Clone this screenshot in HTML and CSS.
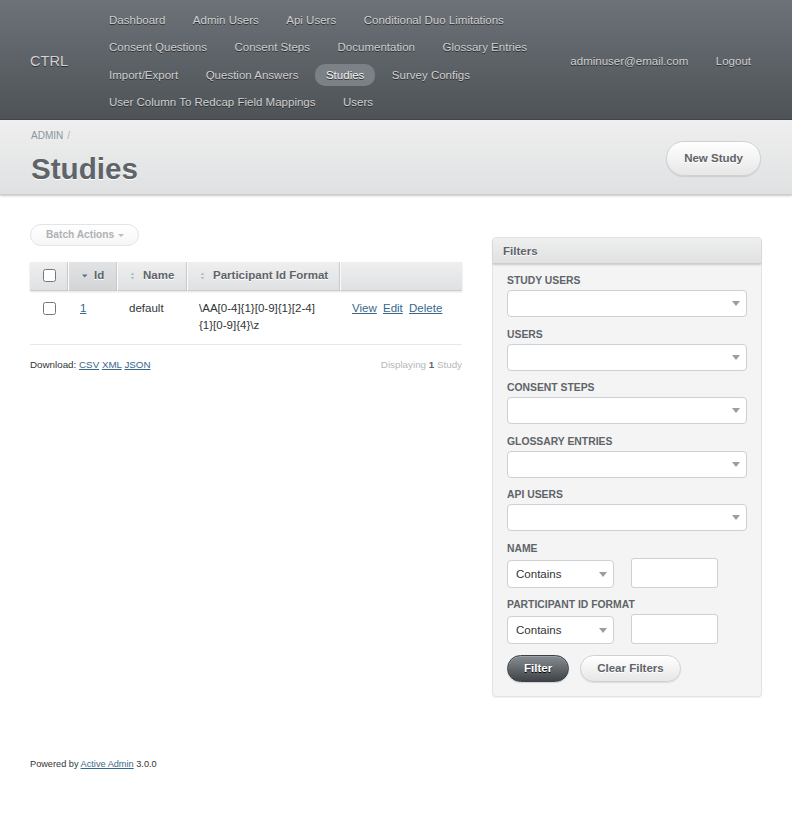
FILE: index.html
```html
<!DOCTYPE html>
<html lang="en">
<head>
<meta charset="utf-8">
<title>Studies | CTRL</title>
<link rel="stylesheet" href="styles.css">
</head>
<body>
<header class="header">
  <h1 class="site-title">CTRL</h1>
  <ul class="tabs">
    <li><a href="#">Dashboard</a></li>
    <li><a href="#">Admin Users</a></li>
    <li><a href="#">Api Users</a></li>
    <li><a href="#">Conditional Duo Limitations</a></li>
    <li><a href="#">Consent Questions</a></li>
    <li><a href="#">Consent Steps</a></li>
    <li><a href="#">Documentation</a></li>
    <li><a href="#">Glossary Entries</a></li>
    <li><a href="#">Import/Export</a></li>
    <li><a href="#">Question Answers</a></li>
    <li class="current"><a href="#">Studies</a></li>
    <li><a href="#">Survey Configs</a></li>
    <li><a href="#">User Column To Redcap Field Mappings</a></li>
    <li><a href="#">Users</a></li>
  </ul>
  <ul class="utility-nav">
    <li><a href="#">adminuser@email.com</a></li>
    <li><a href="#">Logout</a></li>
  </ul>
</header>

<div class="title-bar">
  <div class="title-left">
    <div class="breadcrumb"><a href="#">Admin</a><span class="sep">/</span></div>
    <h2 class="page-title">Studies</h2>
  </div>
  <div class="action-items">
    <a class="button button-large" href="#">New Study</a>
  </div>
</div>

<div class="content">
  <main class="main">
    <div class="table-tools">
      <span class="dropdown-button disabled">Batch Actions<span class="caret"></span></span>
    </div>
    <table class="index-table">
      <thead>
        <tr>
          <th class="col-check"><input type="checkbox" class="cb"></th>
          <th class="col-id sorted"><a href="#" class="sort"><svg class="sort-icon" width="13" height="10" viewBox="0 0 13 10"><path d="M1 3.5 L6.5 3.5 L3.75 6.5 Z" fill="#676d72"/></svg>Id</a></th>
          <th class="col-name"><a href="#" class="sort"><svg class="sort-icon" width="13" height="10" viewBox="0 0 13 10"><path d="M0.5 4 L4.5 4 L2.5 1.5 Z M0.5 6 L4.5 6 L2.5 8.5 Z" fill="#b7bcc0"/></svg>Name</a></th>
          <th class="col-format"><a href="#" class="sort"><svg class="sort-icon" width="13" height="10" viewBox="0 0 13 10"><path d="M0.5 4 L4.5 4 L2.5 1.5 Z M0.5 6 L4.5 6 L2.5 8.5 Z" fill="#b7bcc0"/></svg>Participant Id Format</a></th>
          <th class="col-actions"></th>
        </tr>
      </thead>
      <tbody>
        <tr>
          <td><input type="checkbox" class="cb"></td>
          <td><a href="#">1</a></td>
          <td>default</td>
          <td>\AA[0-4]{1}[0-9]{1}[2-4]{1}[0-9]{4}\z</td>
          <td class="table-actions"><a href="#">View</a> <a href="#">Edit</a> <a href="#">Delete</a></td>
        </tr>
      </tbody>
    </table>
    <div class="index-footer">
      <div class="download">Download: <a href="#">CSV</a> <a href="#">XML</a> <a href="#">JSON</a></div>
      <div class="pagination-info">Displaying <b>1</b> Study</div>
    </div>
  </main>

  <aside class="sidebar">
    <div class="panel">
      <h3 class="panel-title">Filters</h3>
      <form class="panel-body">
        <div class="filter">
          <label>Study Users</label>
          <div class="select-wrap"><select><option></option></select></div>
        </div>
        <div class="filter">
          <label>Users</label>
          <div class="select-wrap"><select><option></option></select></div>
        </div>
        <div class="filter">
          <label>Consent Steps</label>
          <div class="select-wrap"><select><option></option></select></div>
        </div>
        <div class="filter">
          <label>Glossary Entries</label>
          <div class="select-wrap"><select><option></option></select></div>
        </div>
        <div class="filter">
          <label>Api Users</label>
          <div class="select-wrap"><select><option></option></select></div>
        </div>
        <div class="filter">
          <label>Name</label>
          <div class="filter-row">
            <div class="select-wrap small"><select><option>Contains</option></select></div>
            <input type="text" class="text-input">
          </div>
        </div>
        <div class="filter">
          <label>Participant Id Format</label>
          <div class="filter-row">
            <div class="select-wrap small"><select><option>Contains</option></select></div>
            <input type="text" class="text-input">
          </div>
        </div>
        <div class="buttons">
          <button type="button" class="btn btn-dark">Filter</button>
          <button type="button" class="btn">Clear Filters</button>
        </div>
      </form>
    </div>
  </aside>
</div>

<footer class="footer">Powered by <a href="#">Active Admin</a> 3.0.0</footer>
</body>
</html>
```
FILE: styles.css
```css
* { box-sizing: border-box; }
html, body { margin: 0; padding: 0; }
body {
  font-family: "Liberation Sans", Arial, Helvetica, sans-serif;
  font-size: 11.52px;
  line-height: 1.5;
  color: #323537;
  background: #fff;
}
a { color: #38678b; }

/* Header */
.header {
  display: flex;
  align-items: center;
  height: 120px;
  padding: 3px 30px 0 30px;
  background: linear-gradient(180deg, #6c7278 0%, #4e5357 100%);
  border-bottom: 1px solid #43474b;
  text-shadow: 0 1px 0 #2b2e31;
}
.site-title {
  flex: 0 0 68px;
  margin: 0;
  font-size: 14.6px;
  font-weight: normal;
  color: #d2d2d2;
  line-height: 20px;
}
.tabs, .utility-nav {
  list-style: none;
  margin: 0;
  padding: 0;
  display: flex;
  flex-wrap: wrap;
  column-gap: 5.5px;
  row-gap: 5.5px;
}
.tabs { flex: 0 0 450px; }
.utility-nav { margin-left: auto; }
.tabs a, .utility-nav a {
  display: block;
  height: 22px;
  line-height: 22px;
  padding: 0 11px;
  border-radius: 10px;
  color: #d0d0d0;
  text-decoration: none;
  white-space: nowrap;
}
.tabs .current a {
  background: #7b8187;
  color: #f2f2f2;
}

/* Title bar */
.title-bar {
  display: flex;
  align-items: center;
  justify-content: space-between;
  padding: 11px 31px 7px 31px;
  background: linear-gradient(180deg, #efefef 0%, #dfe1e2 100%);
  border-bottom: 1px solid #cdcdcd;
  box-shadow: 0 1px 2px rgba(0, 0, 0, 0.22);
  position: relative;
}
.breadcrumb {
  font-size: 10px;
  line-height: 10px;
  color: #8a949e;
  text-transform: uppercase;
}
.breadcrumb a { color: #8a949e; text-decoration: none; }
.breadcrumb .sep { margin: 0 4px; color: #aab2ba; }
.page-title {
  margin: 10px 0 0 0;
  font-size: 29.6px;
  line-height: 36px;
  font-weight: bold;
  color: #5e6469;
  text-shadow: 0 1px 0 #fff;
}
.action-items { display: flex; margin-top: -2px; }

.button, .btn {
  display: inline-block;
  font-family: inherit;
  font-size: 11.52px;
  font-weight: bold;
  color: #5e6469;
  text-decoration: none;
  text-shadow: 0 1px 0 #fff;
  background: linear-gradient(180deg, #ffffff 0%, #e7e7e7 100%);
  border: 1px solid #d0d0d0;
  border-radius: 200px;
  box-shadow: 0 1px 1px rgba(0, 0, 0, 0.1), inset 0 1px 0 #fff;
  cursor: pointer;
}
.button-large {
  height: 35px;
  line-height: 33px;
  padding: 0 17px;
}

/* Content */
.content {
  display: grid;
  grid-template-columns: 1fr 270px;
  column-gap: 30px;
  padding: 29px 30px 30px 30px;
  align-items: start;
}
.main { min-width: 0; }

.table-tools { margin-bottom: 16px; }
.dropdown-button {
  display: inline-flex;
  align-items: center;
  height: 22px;
  padding: 0 14px 0 15px;
  font-size: 10.2px;
  font-weight: bold;
  color: #aeb2b5;
  background: linear-gradient(180deg, #ffffff 0%, #f6f6f6 100%);
  border: 1px solid #e4e4e4;
  border-radius: 200px;
}
.caret {
  display: inline-block;
  width: 0;
  height: 0;
  margin-left: 4px;
  margin-top: 1px;
  border-left: 3px solid transparent;
  border-right: 3px solid transparent;
  border-top: 3px solid #b9bdc0;
}

.index-table {
  width: 100%;
  table-layout: fixed;
  border-collapse: separate;
  border-spacing: 0;
}
.index-table th {
  text-align: left;
  font-weight: bold;
  color: #5e6469;
  text-shadow: 0 1px 0 #fff;
  padding: 5px 12px 4px 12px;
  background: linear-gradient(180deg, #efefef 0%, #dfe1e2 100%);
  border-bottom: 1px solid #cdcdcd;
  border-left: 1px solid #fbfbfb;
  border-right: 1px solid #d2d4d6;
  box-shadow: 0 1px 2px rgba(0, 0, 0, 0.12);
  white-space: nowrap;
  vertical-align: middle;
}
.index-table th:first-child { border-left: none; }
.index-table th:last-child { border-right: none; }
.index-table th.sorted {
  background: linear-gradient(180deg, #e2e3e5 0%, #d3d5d7 100%);
}
.col-check { width: 38px; }
.col-id { width: 49px; }
.col-name { width: 70px; }
.col-format { width: 153px; }
.index-table th a.sort {
  color: #5e6469;
  text-decoration: none;
  display: inline-flex;
  align-items: center;
}
.sort-icon { display: block; flex: 0 0 13px; }
.index-table td {
  padding: 9px 12px 10px 12px;
  vertical-align: top;
  border-bottom: 1px solid #e8e8e8;
}
.cb {
  margin: 1px 0 0 1px;
  width: 13px;
  height: 13px;
  vertical-align: top;
}
.index-table td .cb { margin-top: 2px; }
.table-actions a { margin-right: 3px; }

.index-footer {
  display: flex;
  justify-content: space-between;
  margin-top: 13px;
  font-size: 9.8px;
}
.pagination-info { color: #b3b8bc; }
.pagination-info b { color: #5e6469; }

/* Sidebar */
.sidebar { margin-top: 13px; }
.panel {
  background: #f4f4f4;
  border: 1px solid #e3e3e3;
  border-radius: 4px;
  box-shadow: 0 1px 1px rgba(0, 0, 0, 0.06);
}
.panel-title {
  margin: 0;
  font-size: 11.52px;
  line-height: 16px;
  font-weight: bold;
  color: #5e6469;
  text-shadow: 0 1px 0 #fff;
  padding: 5px 10px 4px 10px;
  background: linear-gradient(180deg, #efefef 0%, #dfe1e2 100%);
  border-bottom: 1px solid #cdcdcd;
  border-radius: 3px 3px 0 0;
  box-shadow: 0 1px 2px rgba(0, 0, 0, 0.18);
}
.panel-body { padding: 10px 14px 14px 14px; }
.filter { margin-bottom: 10.5px; }
.filter label {
  display: block;
  font-size: 10.37px;
  line-height: 13px;
  margin-bottom: 3px;
  font-weight: bold;
  text-transform: uppercase;
  color: #5e6469;
}
.select-wrap {
  position: relative;
  height: 27px;
}
.select-wrap select {
  -webkit-appearance: none;
  appearance: none;
  width: 100%;
  height: 100%;
  margin: 0;
  padding: 0 24px 0 8px;
  font-family: inherit;
  font-size: 11.52px;
  color: #323537;
  background: #fff;
  border: 1px solid #c9d0d6;
  border-radius: 4px;
  outline: none;
}
.select-wrap::after {
  content: "";
  position: absolute;
  right: 7px;
  top: 11px;
  width: 0;
  height: 0;
  border-left: 4px solid transparent;
  border-right: 4px solid transparent;
  border-top: 5px solid #9a9ea2;
  pointer-events: none;
}
.filter-row {
  display: flex;
  align-items: flex-end;
  column-gap: 17px;
  margin-top: 1px;
}
.select-wrap.small {
  flex: 0 0 107px;
  height: 28px;
}
.select-wrap.small::after { top: 12px; }
.text-input {
  width: 87px;
  height: 30px;
  margin: 0;
  padding: 0 6px;
  font-family: inherit;
  font-size: 11.52px;
  background: #fff;
  border: 1px solid #c9d0d6;
  border-radius: 3px;
  outline: none;
}
.buttons {
  display: flex;
  column-gap: 11px;
  margin-top: 6px;
}
.btn {
  height: 27px;
  line-height: 25px;
  padding: 0 16px;
}
.btn-dark {
  color: #fff;
  text-shadow: 0 1px 0 #000;
  background: linear-gradient(180deg, #868d93 0%, #3f4347 100%);
  border: 1px solid #3d4145;
  box-shadow: 0 1px 1px rgba(0, 0, 0, 0.15), inset 0 1px 0 #9aa0a5;
}

/* Footer */
.footer {
  padding: 31px 30px 30px 30px;
  font-size: 9.2px;
  color: #323537;
}
```
